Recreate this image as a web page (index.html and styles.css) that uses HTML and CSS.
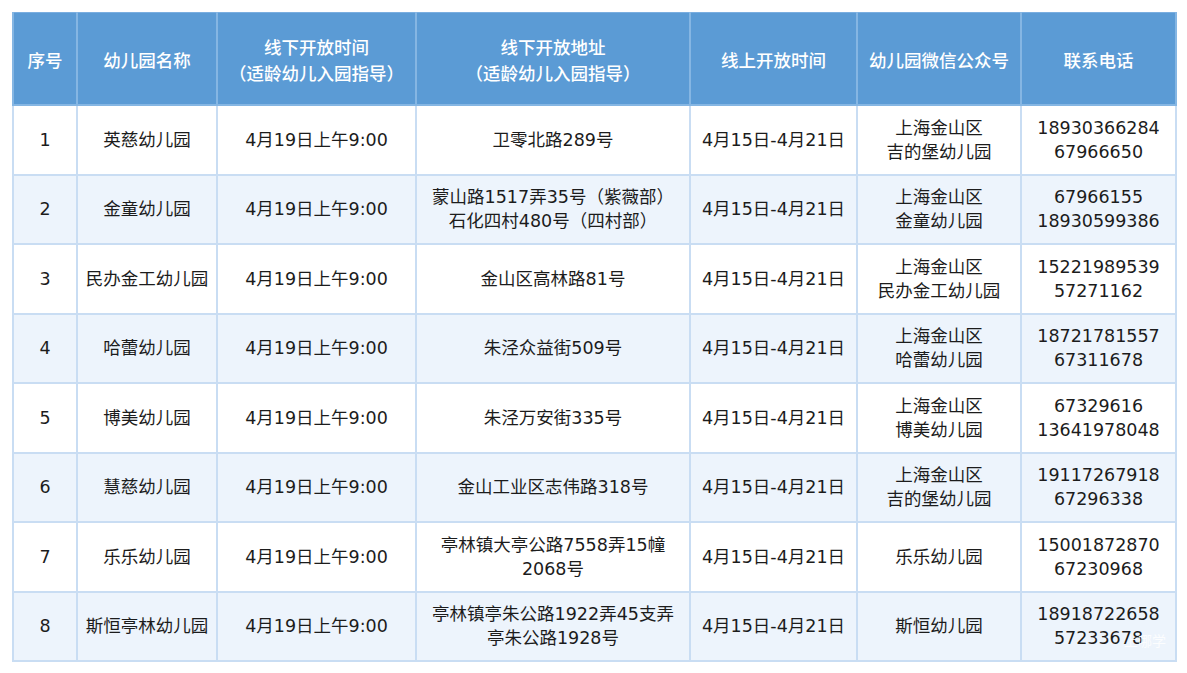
FILE: index.html
```html
<!DOCTYPE html>
<html lang="zh-CN">
<head>
<meta charset="utf-8">
<title>幼儿园开放时间</title>
<link rel="stylesheet" href="styles.css">
</head>
<body>
<div class="wrap">
<table class="tbl">
<colgroup>
<col class="c1"><col class="c2"><col class="c3"><col class="c4"><col class="c5"><col class="c6"><col class="c7">
</colgroup>
<thead>
<tr>
<th>序号</th>
<th>幼儿园名称</th>
<th>线下开放时间<br>（适龄幼儿入园指导）</th>
<th>线下开放地址<br>（适龄幼儿入园指导）</th>
<th>线上开放时间</th>
<th>幼儿园微信公众号</th>
<th>联系电话</th>
</tr>
</thead>
<tbody>
<tr>
<td>1</td><td>英慈幼儿园</td><td>4月19日上午9:00</td><td>卫零北路289号</td><td>4月15日-4月21日</td><td>上海金山区<br>吉的堡幼儿园</td><td>18930366284<br>67966650</td>
</tr>
<tr class="alt">
<td>2</td><td>金童幼儿园</td><td>4月19日上午9:00</td><td>蒙山路1517弄35号（紫薇部）<br>石化四村480号（四村部）</td><td>4月15日-4月21日</td><td>上海金山区<br>金童幼儿园</td><td>67966155<br>18930599386</td>
</tr>
<tr>
<td>3</td><td>民办金工幼儿园</td><td>4月19日上午9:00</td><td>金山区高林路81号</td><td>4月15日-4月21日</td><td>上海金山区<br>民办金工幼儿园</td><td>15221989539<br>57271162</td>
</tr>
<tr class="alt">
<td>4</td><td>哈蕾幼儿园</td><td>4月19日上午9:00</td><td>朱泾众益街509号</td><td>4月15日-4月21日</td><td>上海金山区<br>哈蕾幼儿园</td><td>18721781557<br>67311678</td>
</tr>
<tr>
<td>5</td><td>博美幼儿园</td><td>4月19日上午9:00</td><td>朱泾万安街335号</td><td>4月15日-4月21日</td><td>上海金山区<br>博美幼儿园</td><td>67329616<br>13641978048</td>
</tr>
<tr class="alt">
<td>6</td><td>慧慈幼儿园</td><td>4月19日上午9:00</td><td>金山工业区志伟路318号</td><td>4月15日-4月21日</td><td>上海金山区<br>吉的堡幼儿园</td><td>19117267918<br>67296338</td>
</tr>
<tr>
<td>7</td><td>乐乐幼儿园</td><td>4月19日上午9:00</td><td>亭林镇大亭公路7558弄15幢<br>2068号</td><td>4月15日-4月21日</td><td>乐乐幼儿园</td><td>15001872870<br>67230968</td>
</tr>
<tr class="alt">
<td>8</td><td>斯恒亭林幼儿园</td><td>4月19日上午9:00</td><td>亭林镇亭朱公路1922弄45支弄<br>亭朱公路1928号</td><td>4月15日-4月21日</td><td>斯恒幼儿园</td><td>18918722658<br>57233678</td>
</tr>
</tbody>
</table>
<span class="mark">上哪学</span>
</div>
</body>
</html>
```
FILE: styles.css
```css
html, body {
  margin: 0;
  padding: 0;
  background: #ffffff;
}
body {
  font-family: "DejaVu Sans", "Noto Sans CJK SC", sans-serif;
  color: #1c1c1c;
}
.wrap {
  position: relative;
  padding: 12px 0 0 12px;
}
.tbl {
  border-collapse: collapse;
  table-layout: fixed;
  width: 1163px;
  border: 1.5px solid #7aaee0;
}
.c1 { width: 64px; }
.c2 { width: 140px; }
.c3 { width: 199px; }
.c4 { width: 274px; }
.c5 { width: 167px; }
.c6 { width: 164px; }
.c7 { width: 155px; }
.tbl th, .tbl td {
  text-align: center;
  vertical-align: middle;
  padding: 0;
  font-size: 17.5px;
  line-height: 24px;
  border: 2px solid #c9ddf3;
}
.tbl th {
  background: #5b9bd5;
  color: #ffffff;
  font-weight: 500;
  height: 87px;
  padding-top: 4px;
  line-height: 26px;
  border-color: #85b6e3;
  border-top: none;
}
.tbl td {
  height: 67.5px;
  font-weight: 400;
}
.tbl tr.alt td {
  background: #edf4fc;
}
.mark {
  position: absolute;
  left: 1124px;
  top: 630px;
  font-size: 14px;
  color: rgba(255, 255, 255, 0.85);
}
```
